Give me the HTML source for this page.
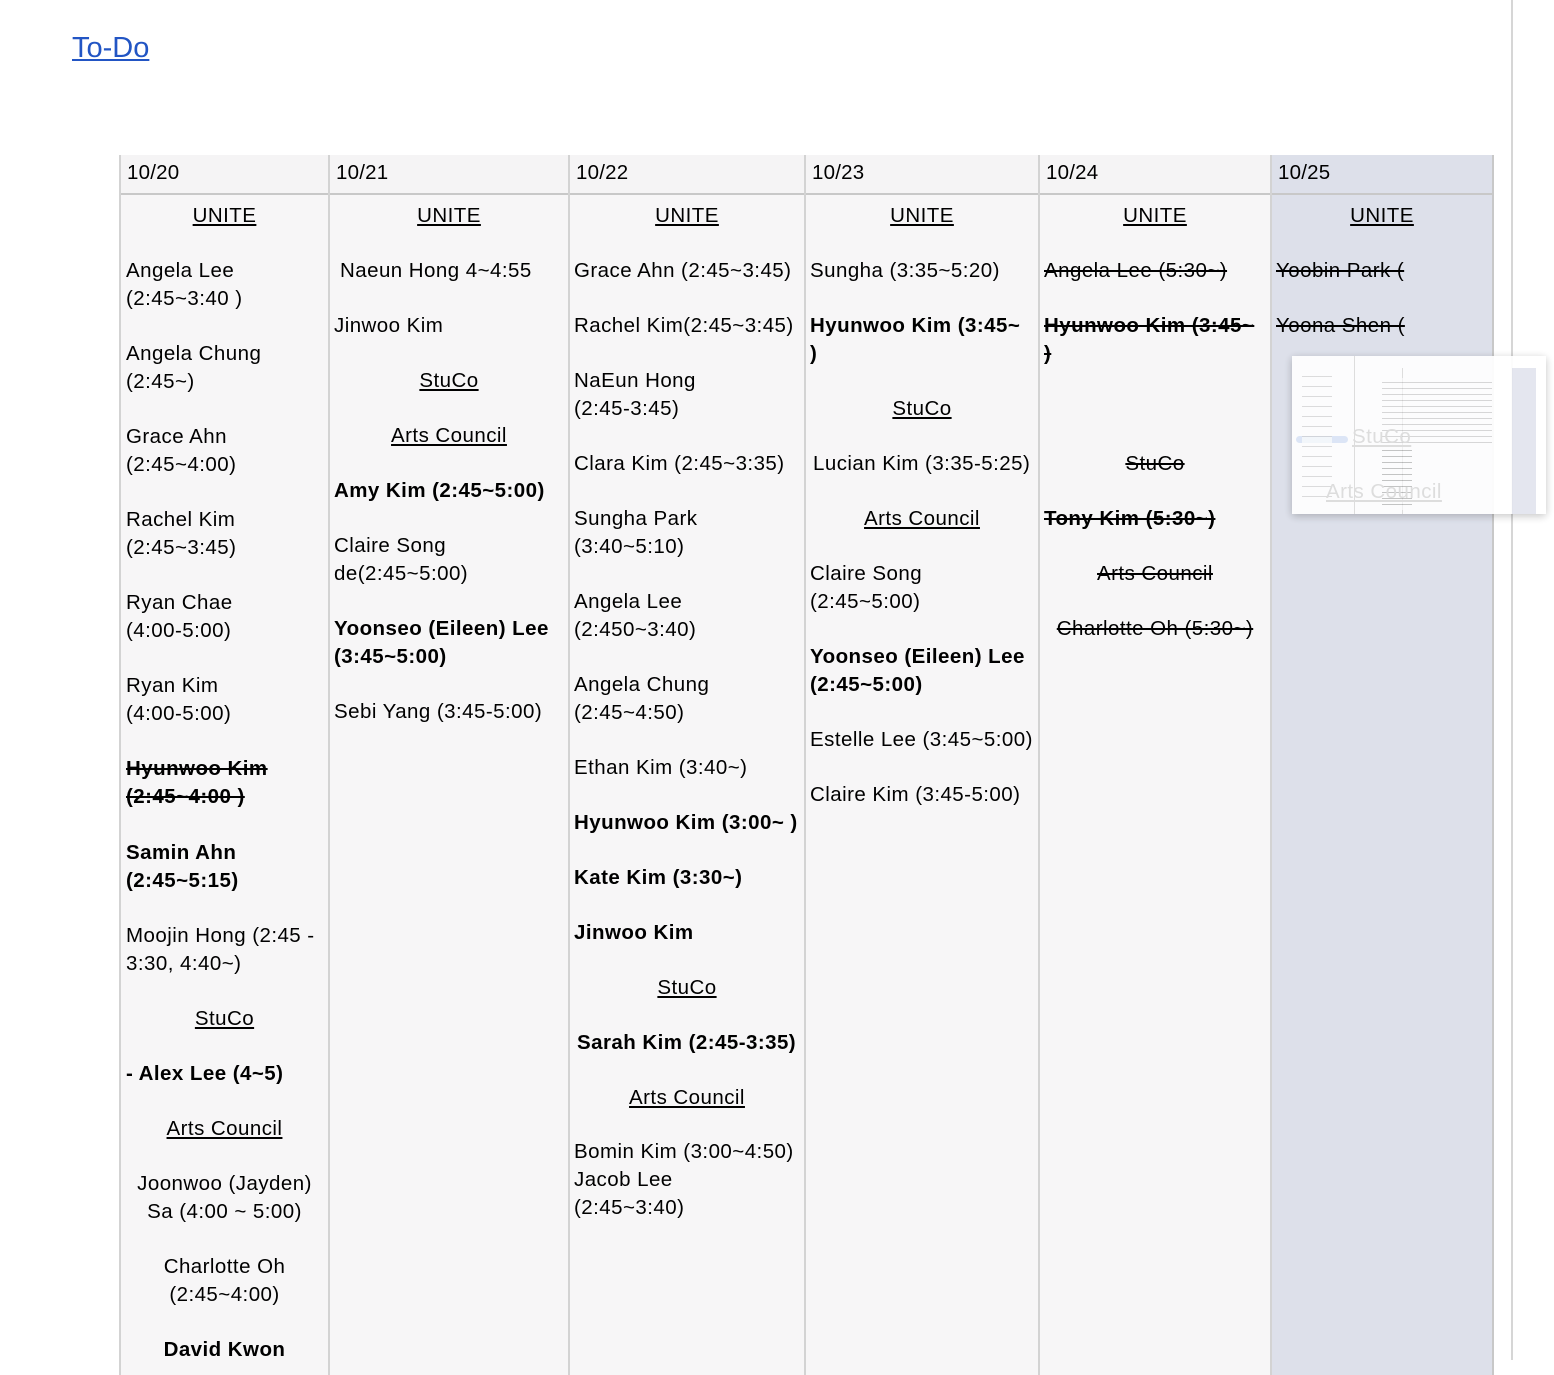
<!DOCTYPE html>
<html><head><meta charset="utf-8"><style>
*{margin:0;padding:0;box-sizing:border-box}
body{width:1554px;height:1360px;overflow:hidden;background:#fff;position:relative;font-family:"Liberation Sans",Arial,sans-serif;color:#000}
.todo{position:absolute;left:72px;top:30px;font-size:29px;color:#2255c4;text-decoration:underline;line-height:36px}
.col{position:absolute;top:155px;height:1220px;background:#f7f6f7;border-left:2px solid #d3d3d3}
.hd{position:absolute;left:0;right:0;top:0;height:40px;border-bottom:2px solid #c8c8c8;background:#f5f4f5}
.hd span{position:absolute;left:6px;top:4px;font-size:20.5px;line-height:28px;letter-spacing:0.2px}
.t{position:absolute;font-size:20.5px;letter-spacing:0.45px;line-height:28px;white-space:nowrap;margin-top:1px}
.c{text-align:center}
.u{text-decoration:underline}
.b{font-weight:bold}
.s{text-decoration:line-through}
.vline{position:absolute;left:1511px;top:0;width:2px;height:1360px;background:#d6d6d6}
.ov{position:absolute;left:1292px;top:356px;width:254px;height:158px;background:#fff;box-shadow:0 2px 8px rgba(0,0,0,.25);opacity:.93}
</style></head><body>
<a class="todo">To-Do</a>
<div class="vline"></div>

<div class="col" style="left:119px;width:209px"><div class="hd"><span>10/20</span></div></div>
<div class="col" style="left:328px;width:240px"><div class="hd"><span>10/21</span></div></div>
<div class="col" style="left:568px;width:236px"><div class="hd"><span>10/22</span></div></div>
<div class="col" style="left:804px;width:234px"><div class="hd"><span>10/23</span></div></div>
<div class="col" style="left:1038px;width:232px"><div class="hd"><span>10/24</span></div></div>
<div class="col" style="left:1270px;width:224px;background:#dde0ea;border-right:2px solid #c8c8c8"><div class="hd" style="background:#dde0ea"><span>10/25</span></div></div>

<!-- col 1 -->
<div class="t c u" style="left:121px;width:207px;top:201px">UNITE</div>
<div class="t" style="left:126px;top:256px">Angela Lee<br>(2:45~3:40 )</div>
<div class="t" style="left:126px;top:339px">Angela Chung<br>(2:45~)</div>
<div class="t" style="left:126px;top:422px">Grace Ahn<br>(2:45~4:00)</div>
<div class="t" style="left:126px;top:505px">Rachel Kim<br>(2:45~3:45)</div>
<div class="t" style="left:126px;top:588px">Ryan Chae<br>(4:00-5:00)</div>
<div class="t" style="left:126px;top:671px">Ryan Kim<br>(4:00-5:00)</div>
<div class="t b s" style="left:126px;top:754px">Hyunwoo Kim<br>(2:45~4:00 )</div>
<div class="t b" style="left:126px;top:838px">Samin Ahn<br>(2:45~5:15)</div>
<div class="t" style="left:126px;top:921px">Moojin Hong (2:45 -<br>3:30, 4:40~)</div>
<div class="t c u" style="left:121px;width:207px;top:1004px">StuCo</div>
<div class="t b" style="left:126px;top:1059px">- Alex Lee (4~5)</div>
<div class="t c u" style="left:121px;width:207px;top:1114px">Arts Council</div>
<div class="t c" style="left:121px;width:207px;top:1169px">Joonwoo (Jayden)<br>Sa (4:00 ~ 5:00)</div>
<div class="t c" style="left:121px;width:207px;top:1252px">Charlotte Oh<br>(2:45~4:00)</div>
<div class="t c b" style="left:121px;width:207px;top:1335px">David Kwon</div>

<!-- col 2 -->
<div class="t c u" style="left:330px;width:238px;top:201px">UNITE</div>
<div class="t" style="left:340px;top:256px">Naeun Hong 4~4:55</div>
<div class="t" style="left:334px;top:311px">Jinwoo Kim</div>
<div class="t c u" style="left:330px;width:238px;top:366px">StuCo</div>
<div class="t c u" style="left:330px;width:238px;top:421px">Arts Council</div>
<div class="t b" style="left:334px;top:476px">Amy Kim (2:45~5:00)</div>
<div class="t" style="left:334px;top:531px">Claire Song<br>de(2:45~5:00)</div>
<div class="t b" style="left:334px;top:614px">Yoonseo (Eileen) Lee<br>(3:45~5:00)</div>
<div class="t" style="left:334px;top:697px">Sebi Yang (3:45-5:00)</div>

<!-- col 3 -->
<div class="t c u" style="left:570px;width:234px;top:201px">UNITE</div>
<div class="t" style="left:574px;top:256px">Grace Ahn (2:45~3:45)</div>
<div class="t" style="left:574px;top:311px">Rachel Kim(2:45~3:45)</div>
<div class="t" style="left:574px;top:366px">NaEun Hong<br>(2:45-3:45)</div>
<div class="t" style="left:574px;top:449px">Clara Kim (2:45~3:35)</div>
<div class="t" style="left:574px;top:504px">Sungha Park<br>(3:40~5:10)</div>
<div class="t" style="left:574px;top:587px">Angela Lee<br>(2:450~3:40)</div>
<div class="t" style="left:574px;top:670px">Angela Chung<br>(2:45~4:50)</div>
<div class="t" style="left:574px;top:753px">Ethan Kim (3:40~)</div>
<div class="t b" style="left:574px;top:808px">Hyunwoo Kim (3:00~ )</div>
<div class="t b" style="left:574px;top:863px">Kate Kim (3:30~)</div>
<div class="t b" style="left:574px;top:918px">Jinwoo Kim</div>
<div class="t c u" style="left:570px;width:234px;top:973px">StuCo</div>
<div class="t b" style="left:577px;top:1028px">Sarah Kim (2:45-3:35)</div>
<div class="t c u" style="left:570px;width:234px;top:1083px">Arts Council</div>
<div class="t" style="left:574px;top:1137px">Bomin Kim (3:00~4:50)<br>Jacob Lee<br>(2:45~3:40)</div>

<!-- col 4 -->
<div class="t c u" style="left:806px;width:232px;top:201px">UNITE</div>
<div class="t" style="left:810px;top:256px">Sungha (3:35~5:20)</div>
<div class="t b" style="left:810px;top:311px">Hyunwoo Kim (3:45~<br>)</div>
<div class="t c u" style="left:806px;width:232px;top:394px">StuCo</div>
<div class="t" style="left:813px;top:449px">Lucian Kim (3:35-5:25)</div>
<div class="t c u" style="left:806px;width:232px;top:504px">Arts Council</div>
<div class="t" style="left:810px;top:559px">Claire Song<br>(2:45~5:00)</div>
<div class="t b" style="left:810px;top:642px">Yoonseo (Eileen) Lee<br>(2:45~5:00)</div>
<div class="t" style="left:810px;top:725px">Estelle Lee (3:45~5:00)</div>
<div class="t" style="left:810px;top:780px">Claire Kim (3:45-5:00)</div>

<!-- col 5 -->
<div class="t c u" style="left:1040px;width:230px;top:201px">UNITE</div>
<div class="t s" style="left:1044px;top:256px">Angela Lee (5:30~)</div>
<div class="t b s" style="left:1044px;top:311px">Hyunwoo Kim (3:45~<br>)</div>
<div class="t c s" style="left:1040px;width:230px;top:449px">StuCo</div>
<div class="t b s" style="left:1044px;top:504px">Tony Kim (5:30~)</div>
<div class="t c s" style="left:1040px;width:230px;top:559px">Arts Council</div>
<div class="t c s" style="left:1040px;width:230px;top:614px">Charlotte Oh (5:30~)</div>

<!-- col 6 -->
<div class="t c u" style="left:1272px;width:220px;top:201px">UNITE</div>
<div class="t s" style="left:1276px;top:256px">Yoobin Park (</div>
<div class="t s" style="left:1276px;top:311px">Yoona Shen (</div>

<div class="ov">
  <div style="position:absolute;left:62px;top:0;width:1px;height:158px;background:#ddd"></div>
  <div style="position:absolute;left:110px;top:12px;width:1px;height:146px;background:#ddd"></div>
  <div style="position:absolute;left:220px;top:12px;width:24px;height:146px;background:#e2e5ee"></div>
  <div style="position:absolute;left:4px;top:80px;width:52px;height:7px;background:#dce6f7;border-radius:4px"></div>
  <div style="position:absolute;left:90px;top:22px;width:110px;height:70px;background:repeating-linear-gradient(0deg,#fff 0 5px,#bbb 5px 6px);opacity:.6"></div>
  <div style="position:absolute;left:90px;top:92px;width:30px;height:62px;background:repeating-linear-gradient(0deg,#fff 0 5px,#999 5px 6px);opacity:.6"></div>
  <div style="position:absolute;left:10px;top:20px;width:30px;height:130px;background:repeating-linear-gradient(0deg,#fff 0 9px,#ccc 9px 10px);opacity:.7"></div>
  <div class="t u" style="left:60px;top:66px;color:#ddd">StuCo</div>
  <div class="t u" style="left:34px;top:121px;color:#ddd">Arts Council</div>
</div>
</body></html>
